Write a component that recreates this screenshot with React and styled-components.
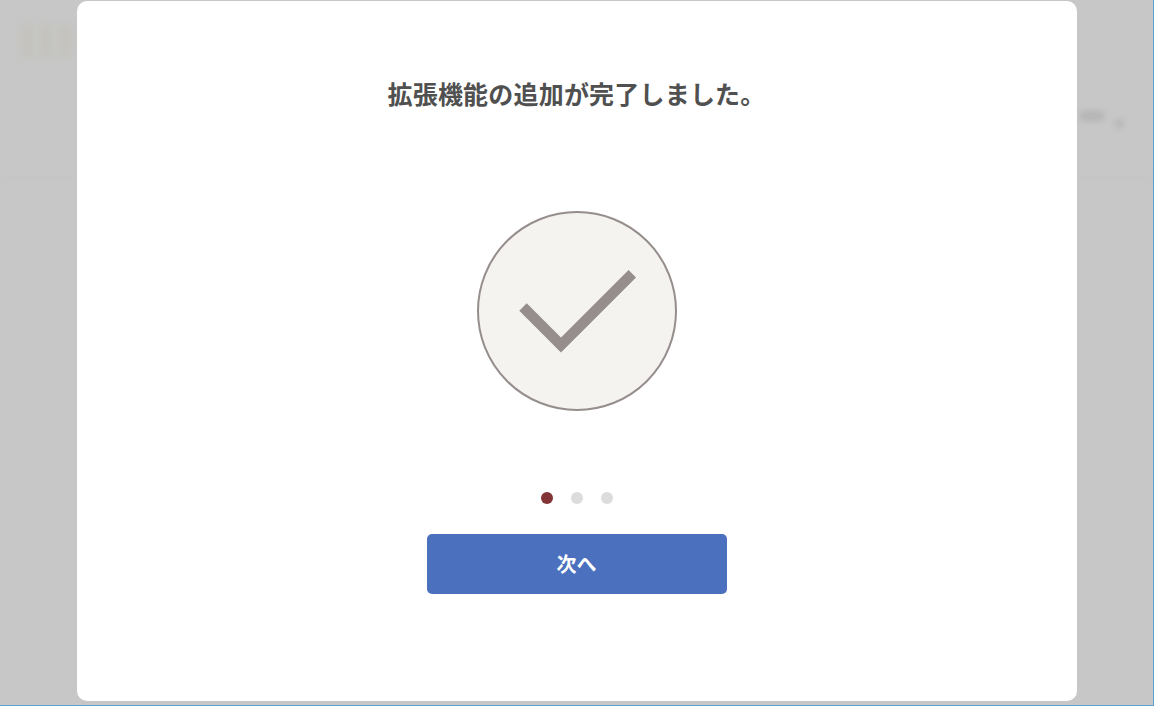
import React from 'react'
import styled, { createGlobalStyle } from 'styled-components'

const GlobalStyle = createGlobalStyle`
    html, body {
        margin: 0;
        padding: 0;
        height: 100%;
        overflow: hidden;
    }
    #root {
        height: 100%;
    }
`

const Page = styled.div`
    position: relative;
    box-sizing: border-box;
    width: 1154px;
    height: 706px;
    background-color: #c7c7c7;
    border-right: 1px solid #5aa3cf;
    border-bottom: 1px solid #5aa3cf;
    overflow: hidden;
    font-family: "Liberation Sans", "Noto Sans CJK JP", sans-serif;
`

const BlurredHeader = styled.div`
    display: flex;
    align-items: flex-start;
    justify-content: space-between;
    box-sizing: border-box;
    height: 178px;
    padding: 24px 30px 0 20px;
    border-bottom: 1px solid #c3c3c3;
    filter: blur(3px);
`

const BlurredLogo = styled.div`
    display: flex;
    gap: 5px;
`

const BlurredMark = styled.div`
    width: 14px;
    height: 34px;
    background-color: #c4c3be;
`

const BlurredMenu = styled.div`
    display: flex;
    align-items: center;
    gap: 12px;
    margin-top: 80px;
`

const BlurredLabel = styled.div`
    width: 24px;
    height: 10px;
    background-color: #b4b4b4;
`

const BlurredArrow = styled.div`
    width: 7px;
    height: 7px;
    margin-top: 16px;
    background-color: #b0b0b0;
`

const Overlay = styled.div`
    position: absolute;
    top: 1px;
    left: 0;
    right: 0;
    display: flex;
    justify-content: center;
`

const Modal = styled.div`
    display: flex;
    flex-direction: column;
    align-items: center;
    width: 1000px;
    height: 700px;
    background-color: #fff;
    border-radius: 10px;
`

const Title = styled.h2`
    margin: 75px 0 0;
    font-size: 25px;
    line-height: 34px;
    letter-spacing: 0.2px;
    font-weight: 700;
    color: #505050;
    font-family: "Noto Sans CJK JP", sans-serif;
`

const CheckCircle = styled.svg`
    display: block;
    margin-top: 101px;
`

const Dots = styled.div`
    display: flex;
    gap: 18px;
    margin-top: 81px;
`

const Dot = styled.span`
    width: 12px;
    height: 12px;
    border-radius: 50%;
    background-color: ${props => (props.$active ? '#823335' : '#dcdcdc')};
`

const NextButton = styled.button`
    width: 300px;
    height: 60px;
    margin-top: 30px;
    padding: 0 0 2px;
    border: none;
    border-radius: 5px;
    background-color: #4a70be;
    color: #fff;
    font-size: 20px;
    font-weight: 700;
    font-family: "Noto Sans CJK JP", sans-serif;
    cursor: pointer;
`

const App = () => {
    return (
        <Page>
            <GlobalStyle />
            <BlurredHeader>
                <BlurredLogo>
                    <BlurredMark />
                    <BlurredMark />
                    <BlurredMark />
                </BlurredLogo>
                <BlurredMenu>
                    <BlurredLabel />
                    <BlurredArrow />
                </BlurredMenu>
            </BlurredHeader>
            <Overlay>
                <Modal>
                    <Title>拡張機能の追加が完了しました。</Title>
                    <CheckCircle width="200" height="200" viewBox="0 0 200 200">
                        <circle cx="100" cy="100" r="99" fill="#f4f3f0" stroke="#968d8d" strokeWidth="2" />
                        <path d="M46 96 L84 134 L155.3 62.7" fill="none" stroke="#968d8d" strokeWidth="10.5" />
                    </CheckCircle>
                    <Dots>
                        <Dot $active />
                        <Dot />
                        <Dot />
                    </Dots>
                    <NextButton>次へ</NextButton>
                </Modal>
            </Overlay>
        </Page>
    )
}

export default App
